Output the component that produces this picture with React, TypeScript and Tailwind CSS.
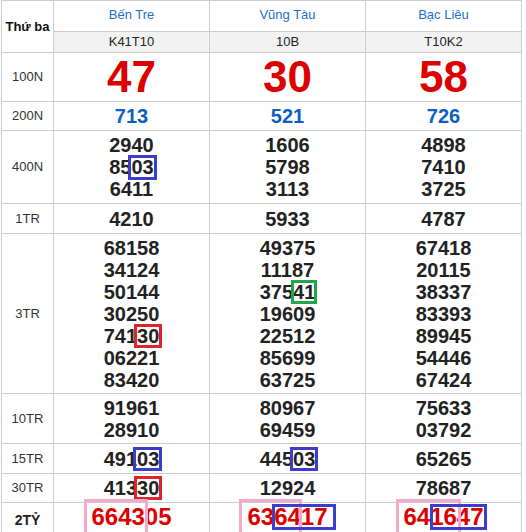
import React from "react";

type Box = { from: number; len: number; color: "blue" | "red" | "green" | "pink"; l?: number; r?: number; t?: number; h?: number };
type Num = { text: string; boxes?: Box[] };

const boxColor: Record<Box["color"], string> = {
  blue: "border-[#3d3dcc]",
  red: "border-[#e1212b]",
  green: "border-[#23a64a]",
  pink: "border-[#f5a9c8]",
};

const provinces = [
  { name: "Bến Tre", code: "K41T10" },
  { name: "Vũng Tàu", code: "10B" },
  { name: "Bạc Liêu", code: "T10K2" },
];

const n = (text: string, boxes?: Box[]): Num => ({ text, boxes });

const rows: { label: string; kind: "big" | "blue" | "plain" | "jackpot"; cells: Num[][] }[] = [
  { label: "100N", kind: "big", cells: [[n("47")], [n("30")], [n("58")]] },
  { label: "200N", kind: "blue", cells: [[n("713")], [n("521")], [n("726")]] },
  {
    label: "400N",
    kind: "plain",
    cells: [
      [n("2940"), n("8503", [{ from: 2, len: 2, color: "blue", t: -1, h: 25 }]), n("6411")],
      [n("1606"), n("5798"), n("3113")],
      [n("4898"), n("7410"), n("3725")],
    ],
  },
  { label: "1TR", kind: "plain", cells: [[n("4210")], [n("5933")], [n("4787")]] },
  {
    label: "3TR",
    kind: "plain",
    cells: [
      [n("68158"), n("34124"), n("50144"), n("30250"), n("74130", [{ from: 3, len: 2, color: "red" }]), n("06221"), n("83420")],
      [n("49375"), n("11187"), n("37541", [{ from: 3, len: 2, color: "green", l: 2, r: 2 }]), n("19609"), n("22512"), n("85699"), n("63725")],
      [n("67418"), n("20115"), n("38337"), n("83393"), n("89945"), n("54446"), n("67424")],
    ],
  },
  { label: "10TR", kind: "plain", cells: [[n("91961"), n("28910")], [n("80967"), n("69459")], [n("75633"), n("03792")]] },
  {
    label: "15TR",
    kind: "plain",
    cells: [[n("49103", [{ from: 3, len: 2, color: "blue", l: 4 }])], [n("44503", [{ from: 3, len: 2, color: "blue" }])], [n("65265")]],
  },
  { label: "30TR", kind: "plain", cells: [[n("41330", [{ from: 3, len: 2, color: "red" }])], [n("12924")], [n("78687")]] },
  {
    label: "2TỶ",
    kind: "jackpot",
    cells: [
      [n("664305", [{ from: 0, len: 4, color: "pink", l: 7, r: 3, t: -4, h: 40 }])],
      [
        n("636417", [
          { from: 0, len: 4, color: "pink", l: 8, r: 1, t: -4, h: 40 },
          { from: 2, len: 4, color: "blue", l: 2, r: 8, t: 1, h: 26 },
        ]),
      ],
      [
        n("641647", [
          { from: 0, len: 4, color: "pink", l: 7, r: 4, t: -4, h: 40 },
          { from: 2, len: 4, color: "blue", l: 0, r: 3, t: 1, h: 26 },
        ]),
      ],
    ],
  },
];

const numClass = {
  big: "text-[44px] leading-[42px] font-bold text-[#dd0000]",
  blue: "text-[20px] leading-[22px] font-bold text-[#0b5fc4]",
  plain: "text-[20px] leading-[22px] font-bold text-[#222]",
  jackpot: "text-[24px] leading-[28px] font-bold text-[#dd0000]",
};

function Number({ num }: { num: Num }) {
  return (
    <span className="relative inline-block">
      {num.text}
      {num.boxes?.map((b, i) => (
        <span
          key={i}
          className={`absolute border-[3px] pointer-events-none ${boxColor[b.color]}`}
          style={{
            left: `calc(${b.from}ch - ${b.l ?? 3}px)`,
            width: `calc(${b.len}ch + ${(b.l ?? 3) + (b.r ?? 3)}px)`,
            top: b.t ?? -1,
            height: b.h ?? 24,
          }}
        />
      ))}
    </span>
  );
}

export default function App() {
  return (
    <div className="bg-white w-[526px] h-[532px] overflow-hidden" style={{ fontFamily: '"Liberation Sans", Arial, sans-serif' }}>
      <div className="ml-px grid grid-cols-[52px_156px_156px_156px] grid-rows-[31px_21px_49px_29px_73px_30px_160px_50px_30px_29px_auto] border-l border-t border-[#cccccc] w-fit">
        <div className="row-span-2 flex items-center justify-center border-r border-b border-[#cccccc] text-[13px] font-bold text-[#111]">
          Thứ ba
        </div>
        {provinces.map((p) => (
          <div key={p.name} className="flex items-center justify-center pb-[2px] border-r border-b border-[#cccccc] text-[13px] text-[#1b6fd1]">
            {p.name}
          </div>
        ))}
        {provinces.map((p) => (
          <div key={p.code} className="flex items-center justify-center bg-[#f2f2f2] border-r border-b border-[#cccccc] text-[13px] text-[#222]">
            {p.code}
          </div>
        ))}

        {rows.map((row) => (
          <React.Fragment key={row.label}>
            <div
              className={
                row.kind === "jackpot"
                  ? "flex items-start justify-center pt-[7px] h-[36px] border-r border-b border-[#cccccc] text-[14px] font-bold text-[#222]"
                  : "flex items-center justify-center border-r border-b border-[#cccccc] text-[13px] text-[#333]"
              }
            >
              {row.label}
            </div>
            {row.cells.map((cell, ci) => (
              <div
                key={ci}
                className={
                  row.kind === "jackpot"
                    ? `flex flex-col items-center justify-start border-r border-b border-[#cccccc] ${numClass[row.kind]}`
                    : `flex flex-col items-center justify-center border-r border-b border-[#cccccc] ${numClass[row.kind]}`
                }
              >
                {cell.map((num, k) => (
                  <Number key={k} num={num} />
                ))}
              </div>
            ))}
          </React.Fragment>
        ))}
      </div>
    </div>
  );
}
